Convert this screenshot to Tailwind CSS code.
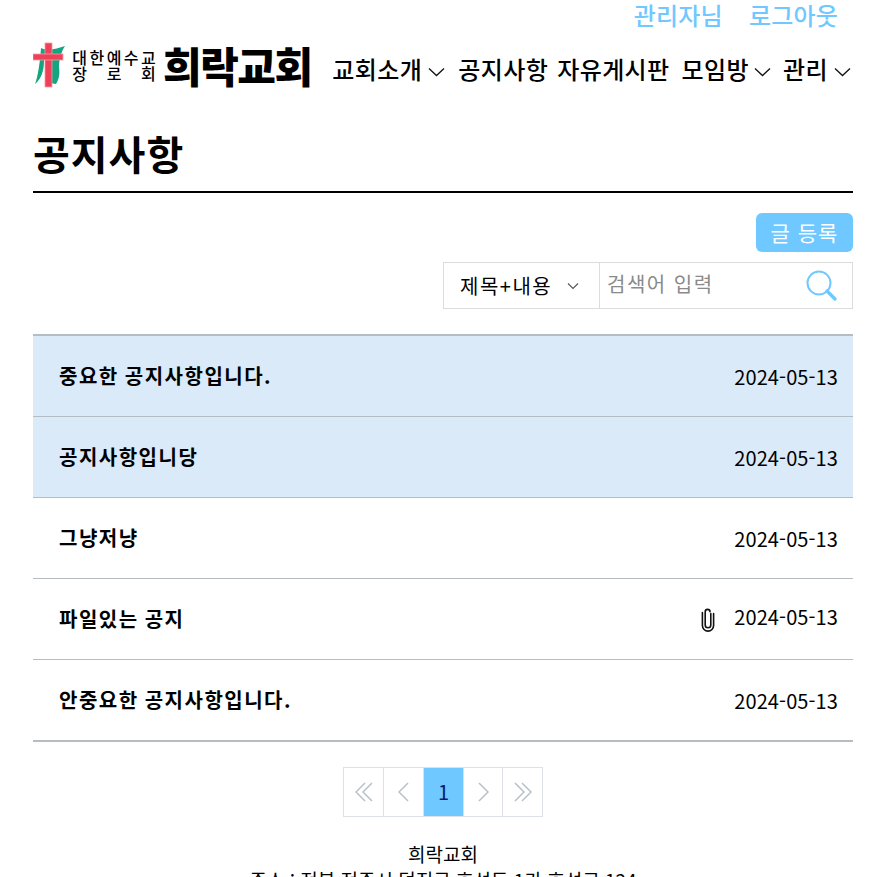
<!DOCTYPE html>
<html lang="ko"><head><meta charset="utf-8">
<script src="https://cdn.jsdelivr.net/npm/@tailwindcss/browser@4"></script>
</head>
<body class="bg-white text-black h-[877px] overflow-hidden font-['Noto_Sans_CJK_KR','Noto_Sans',sans-serif]">
<div class="px-[33px] w-[886px]">
  <div class="h-[30px] flex justify-end items-center gap-[26px] pr-[15px] text-[24px] leading-[30px] tracking-[0.2px] text-[#6fc8ff] font-medium">
    <span>관리자님</span><span>로그아웃</span>
  </div>
  <header class="h-[70px] flex items-center justify-between">
    <div class="flex items-center">
      <svg width="33" height="46" viewBox="0 0 33 46" class="mr-[5px] shrink-0">
        <path d="M8 6 C14 9 24 7 32 4 C28 10 26 18 26 25 C27 32 26 37 23 42 L17 41 L17 18 L11 18 C11 28 9 36 2 42 C5 34 7 20 8 6Z" fill="#12a57f"/>
        <rect x="12" y="1" width="7" height="44" fill="#ee4058" stroke="#f49aa6" stroke-width="0.8"/>
        <rect x="0" y="12" width="30" height="6" fill="#ee4058" stroke="#f49aa6" stroke-width="0.8"/>
      </svg>
      <div class="grid grid-cols-5 w-[86px] text-[16px] leading-[16px] text-center font-medium">
        <span>대</span><span>한</span><span>예</span><span>수</span><span>교</span>
        <span>장</span><span></span><span>로</span><span></span><span>회</span>
      </div>
      <span class="ml-[6px] text-[42px] leading-[46px] font-extrabold tracking-[-1.5px]">희락교회</span>
    </div>
    <nav class="flex items-center text-[24px] font-medium leading-[30px] tracking-[0.4px] pr-[2px] pt-[8px]">
      <span class="flex items-center gap-[6px]">교회소개<svg class="mt-[6px]" width="17" height="10" viewBox="0 0 17 10" fill="none" stroke="#111" stroke-width="1.3"><path d="M1 1.5 8.5 8.5 16 1.5"/></svg></span>
      <span class="ml-[13px]">공지사항</span>
      <span class="ml-[9px]">자유게시판</span>
      <span class="ml-[12px] flex items-center gap-[5px]">모임방<svg class="mt-[6px]" width="17" height="10" viewBox="0 0 17 10" fill="none" stroke="#111" stroke-width="1.3"><path d="M1 1.5 8.5 8.5 16 1.5"/></svg></span>
      <span class="ml-[12px] flex items-center gap-[6px]">관리<svg class="mt-[6px]" width="17" height="10" viewBox="0 0 17 10" fill="none" stroke="#111" stroke-width="1.3"><path d="M1 1.5 8.5 8.5 16 1.5"/></svg></span>
    </nav>
  </header>
  <h1 class="mt-[26px] h-[67px] border-b-2 border-black text-[40px] leading-[54px] tracking-[1px] font-bold">공지사항</h1>
  <div class="flex justify-end mt-[20px]">
    <button class="w-[97px] h-[39px] rounded-[6px] bg-[#6fc8ff] text-white text-[21px] leading-[39px] tracking-[1px]">글 등록</button>
  </div>
  <div class="flex justify-end mt-[10px]">
    <div class="w-[410px] h-[47px] border border-[#dcdcdc] flex">
      <div class="w-[156px] border-r border-[#dcdcdc] flex items-center pl-[16px] text-[20px] tracking-[1.5px] gap-[15px]">
        <span>제목+내용</span>
        <svg width="12" height="8" viewBox="0 0 12 8" fill="none" stroke="#555" stroke-width="1.1"><path d="M1 1.5 6 6.5 11 1.5"/></svg>
      </div>
      <div class="flex-1 flex items-center justify-between pl-[7px] pr-[14px]">
        <span class="text-[20px] text-[#8a8a8a] tracking-[1.5px] -mt-[3px]">검색어 입력</span>
        <svg width="32" height="32" viewBox="0 0 32 32" fill="none" stroke="#6fc8ff"><circle cx="13" cy="13" r="11.5" stroke-width="2"/><path d="M21 21 29 29" stroke-width="3.4" stroke-linecap="round"/></svg>
      </div>
    </div>
  </div>
  <ul class="mt-[25px] border-y-2 border-[#b4bcc4]">
    <li class="h-[81px] bg-[#daeaf8] flex items-center justify-between pl-[26px] pr-[15px] border-b border-[#b4bcc4]"><span class="text-[20px] tracking-[1.5px] [word-spacing:-1px] font-bold">중요한 공지사항입니다.</span><span class="text-[20px] tracking-[0.1px] pt-[2px]">2024-05-13</span></li>
    <li class="h-[81px] bg-[#daeaf8] flex items-center justify-between pl-[26px] pr-[15px] border-b border-[#b4bcc4]"><span class="text-[20px] tracking-[1.5px] [word-spacing:-1px] font-bold">공지사항입니당</span><span class="text-[20px] tracking-[0.1px] pt-[2px]">2024-05-13</span></li>
    <li class="h-[81px] flex items-center justify-between pl-[26px] pr-[15px] border-b border-[#b4bcc4]"><span class="text-[20px] tracking-[1.5px] [word-spacing:-1px] font-bold">그냥저냥</span><span class="text-[20px] tracking-[0.1px] pt-[2px]">2024-05-13</span></li>
    <li class="h-[81px] flex items-center justify-between pl-[26px] pr-[15px] border-b border-[#b4bcc4]"><span class="text-[20px] tracking-[1.5px] [word-spacing:-1px] font-bold">파일있는 공지</span><span class="flex items-center gap-[19px] text-[20px] tracking-[0.1px]"><svg width="14" height="25" viewBox="0 0 14 25" fill="none" stroke="#111" stroke-width="1.6" stroke-linecap="round"><path d="M9.8 6.5V18a2.8 2.8 0 0 1-5.6 0V4.8a2.4 2.4 0 0 1 4.8 0"/><path d="M12.6 6.5V18.5a5.6 5.6 0 0 1-11.2 0V5.5"/></svg><span class="pb-[4px]">2024-05-13</span></span></li>
    <li class="h-[80px] flex items-center justify-between pl-[26px] pr-[15px]"><span class="text-[20px] tracking-[1.5px] [word-spacing:-1px] font-bold">안중요한 공지사항입니다.</span><span class="text-[20px] tracking-[0.1px] pt-[2px]">2024-05-13</span></li>
  </ul>
  <div class="mt-[25px] flex justify-center">
    <div class="flex h-[50px] border border-[#dde0e4] divide-x divide-[#dde0e4]">
      <span class="w-[40px] flex items-center justify-center"><svg width="18" height="20" viewBox="0 0 18 20" fill="none" stroke="#b8c0ca" stroke-width="1.5"><path d="M10 1 1 10 10 19M17 1 8 10 17 19"/></svg></span>
      <span class="w-[40px] flex items-center justify-center"><svg width="11" height="20" viewBox="0 0 11 20" fill="none" stroke="#b8c0ca" stroke-width="1.5"><path d="M10 1 1 10 10 19"/></svg></span>
      <span class="w-[40px] bg-[#6fc8ff] flex items-center justify-center text-[20px] text-[#0c1a70]">1</span>
      <span class="w-[39px] flex items-center justify-center"><svg width="11" height="20" viewBox="0 0 11 20" fill="none" stroke="#b8c0ca" stroke-width="1.5"><path d="M1 1 10 10 1 19"/></svg></span>
      <span class="w-[39px] flex items-center justify-center"><svg width="18" height="20" viewBox="0 0 18 20" fill="none" stroke="#b8c0ca" stroke-width="1.5"><path d="M1 1 10 10 1 19M8 1 17 10 8 19"/></svg></span>
    </div>
  </div>
  <footer class="mt-[24px] text-center text-[19px] leading-[26px]">
    <p>희락교회</p>
    <p class="whitespace-nowrap">주소 : 전북 전주시 덕진구 호성동 1가 호성로 124</p>
  </footer>
</div>
</body></html>
